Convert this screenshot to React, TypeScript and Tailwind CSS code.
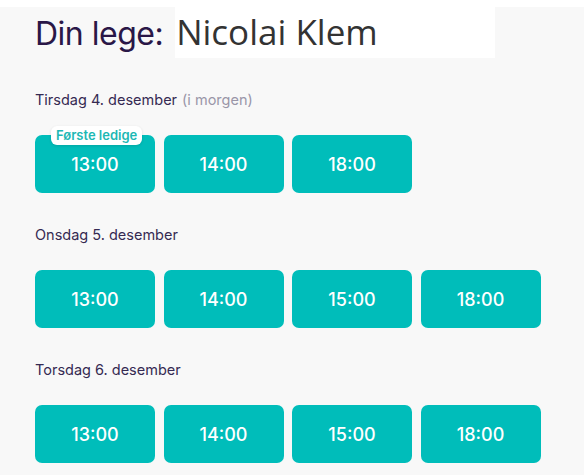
const days = [
  { label: 'Tirsdag 4. desember', note: '(i morgen)', times: ['13:00', '14:00', '18:00'] },
  { label: 'Onsdag 5. desember', times: ['13:00', '14:00', '15:00', '18:00'] },
  { label: 'Torsdag 6. desember', times: ['13:00', '14:00', '15:00', '18:00'] },
];

function TimeButton({ time, first }: { time: string; first?: boolean }) {
  return (
    <button className="relative flex h-[58px] w-[120px] items-center justify-center rounded-[7px] bg-[#00bdba] text-[18px] font-medium text-white">
      {first && (
        <span className="absolute -top-[9px] left-[16px] rounded-[6px] bg-white px-[5px] py-[1px] text-[13px] font-semibold leading-[17px] text-[#1db8b4] shadow-[0_1px_3px_rgba(0,0,0,0.12)]">
          Første ledige
        </span>
      )}
      {time}
    </button>
  );
}

export default function App() {
  return (
    <div className="h-[475px] w-[584px] bg-white pt-[7px] font-['Inter',sans-serif]">
      <div className="h-[468px] bg-[#f8f8f8] pl-[35px]">
        <div className="flex items-end">
          <h1 className="pb-[4px] pr-[12px] text-[32px] leading-[40px] tracking-[-0.5px] text-[#2a1747]">Din lege:</h1>
          <div className="h-[51px] w-[320px] bg-white pl-[1px] font-['Open_Sans',sans-serif] text-[35px] leading-[50px] text-[#333333]">
            Nicolai Klem
          </div>
        </div>

        <div className="mt-[32px] flex flex-col gap-[32px]">
          {days.map((d, i) => (
            <section key={d.label}>
              <p className="text-[14.5px] leading-[20px] text-[#352a52]">
                {d.label}
                {d.note && <span className="ml-[5px] text-[#9a96a8]">{d.note}</span>}
              </p>
              <div className="mt-[25px] flex gap-[8.5px]">
                {d.times.map((t, j) => (
                  <TimeButton key={t} time={t} first={i === 0 && j === 0} />
                ))}
              </div>
            </section>
          ))}
        </div>
      </div>
    </div>
  );
}
